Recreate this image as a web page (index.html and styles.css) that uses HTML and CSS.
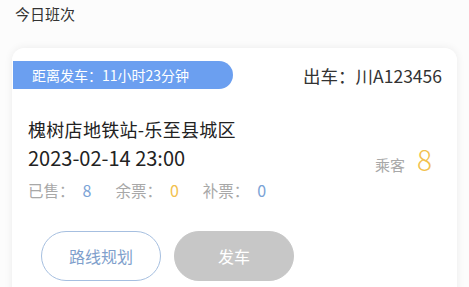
FILE: index.html
```html
<!DOCTYPE html>
<html lang="zh">
<head>
<meta charset="utf-8">
<link rel="stylesheet" href="styles.css">
</head>
<body>
<div class="page">
  <div class="title">今日班次</div>
  <div class="card">
    <div class="top">
      <div class="badge">距离发车：11小时23分钟</div>
      <div class="plate">出车：川A123456</div>
    </div>
    <div class="body">
      <div class="info">
        <div class="route">槐树店地铁站-乐至县城区</div>
        <div class="date">2023-02-14 23:00</div>
        <div class="stats">
          <span>已售：<b class="blue">8</b></span>
          <span>余票：<b class="yellow">0</b></span>
          <span>补票：<b class="blue">0</b></span>
        </div>
      </div>
      <div class="passengers"><span class="plabel">乘客</span><span class="pnum">8</span></div>
    </div>
    <div class="actions">
      <div class="btn outline">路线规划</div>
      <div class="btn gray">发车</div>
    </div>
  </div>
</div>
</body>
</html>
```
FILE: styles.css
```css
html, body {
  margin: 0;
  padding: 0;
  background: #fcfcfc;
  overflow: hidden;
  font-family: "Noto Sans CJK SC", "Noto Sans", sans-serif;
}
.page {
  padding: 3px 12px 0 12px;
  width: 445px;
  height: 284px;
  overflow: hidden;
}
.title {
  font-size: 15px;
  color: #333;
  line-height: 22px;
  padding-left: 3px;
  height: 45px;
}
.card {
  background: #fff;
  border-radius: 12px;
  box-shadow: 0 0 8px rgba(0,0,0,0.07);
  padding-top: 13px;
  height: 260px;
}
.top {
  display: flex;
  align-items: center;
  justify-content: space-between;
  padding-right: 15px;
}
.badge {
  background: #6b9ff0;
  color: #fff;
  font-size: 14px;
  height: 28px;
  line-height: 28px;
  width: 201px;
  padding-left: 19px;
  margin-left: 1px;
  border-radius: 0 14px 14px 0;
}
.plate {
  font-size: 17.5px;
  color: #333;
}
.body {
  display: flex;
  justify-content: space-between;
  align-items: center;
  padding: 26px 25px 0 16px;
}
.route {
  font-size: 18px;
  letter-spacing: 0.3px;
  color: #222;
  line-height: 28px;
}
.date {
  font-size: 20px;
  color: #222;
  line-height: 28px;
  margin-top: 1px;
}
.stats {
  font-size: 15.5px;
  color: #a8a8a8;
  line-height: 22px;
  margin-top: 7px;
  display: flex;
  gap: 24px;
}
.stats b {
  font-weight: normal;
  margin-left: 8px;
  font-size: 16px;
}
.blue { color: #7aa3d6; }
.yellow { color: #f2c14e; }
.passengers {
  display: flex;
  align-items: baseline;
  gap: 12px;
  margin-top: 2px;
}
.plabel {
  font-size: 15px;
  color: #a8a8a8;
}
.pnum {
  font-size: 28px;
  font-weight: 300;
  color: #f2c14e;
}
.actions {
  display: flex;
  gap: 13px;
  padding: 30px 0 0 29px;
}
.btn {
  width: 118px;
  height: 48px;
  border-radius: 25px;
  display: flex;
  align-items: center;
  justify-content: center;
  font-size: 16px;
}
.outline {
  border: 1px solid #a6bfe0;
  color: #7f9fcc;
}
.gray {
  background: #c7c7c7;
  color: #fff;
  border: 1px solid #c7c7c7;
}
```
